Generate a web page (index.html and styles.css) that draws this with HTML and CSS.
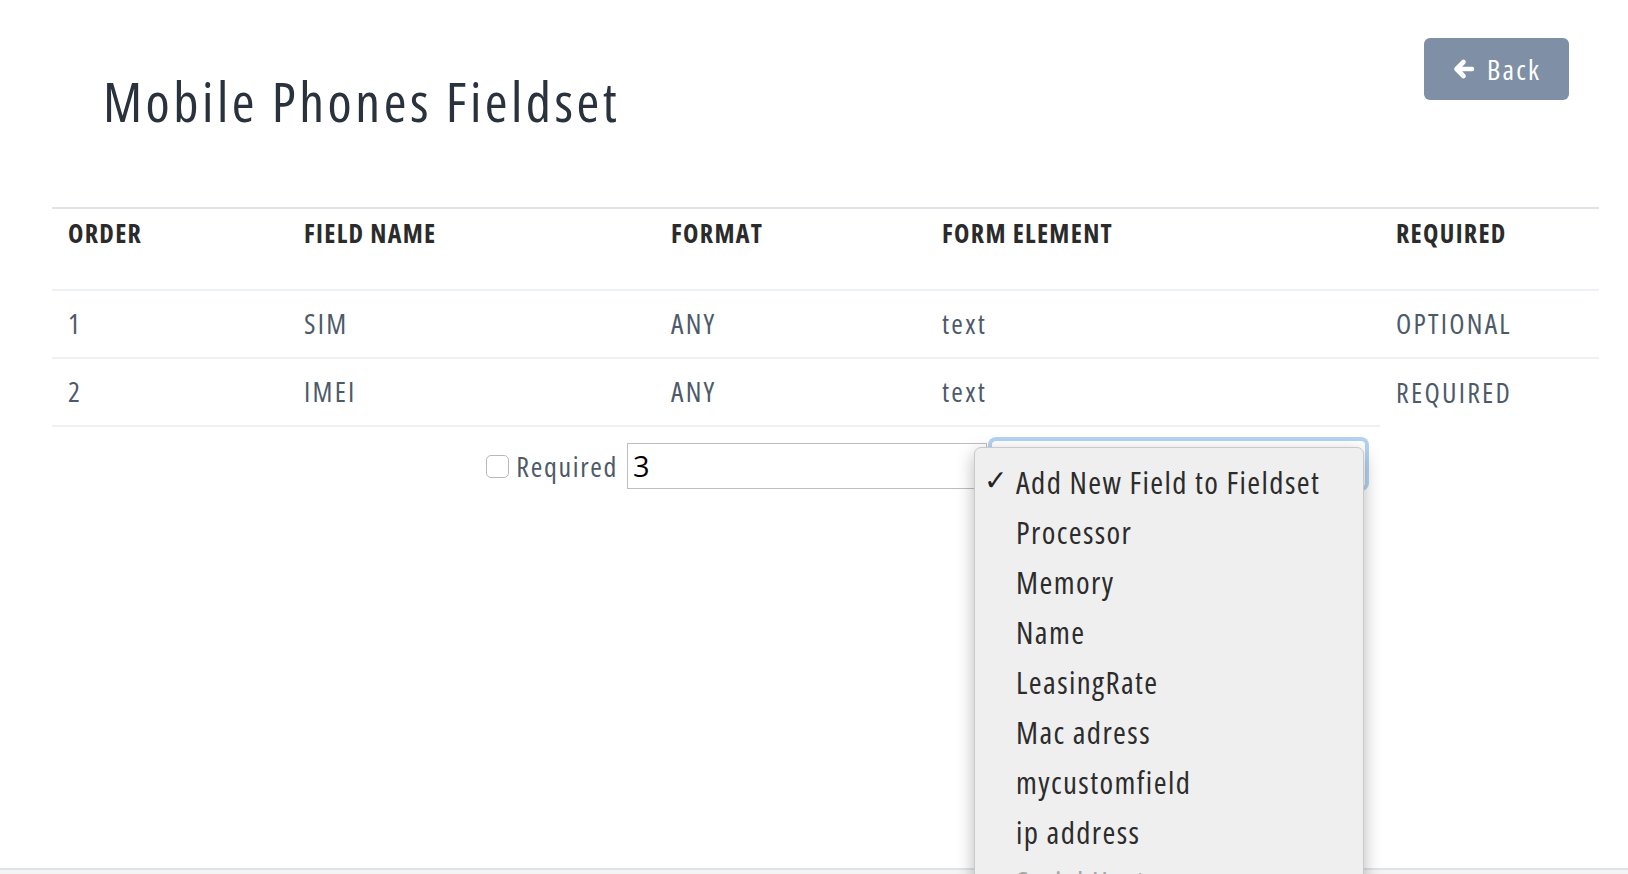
FILE: index.html
```html
<!DOCTYPE html>
<html>
<head>
<meta charset="utf-8">
<title>Mobile Phones Fieldset</title>
<link rel="stylesheet" href="styles.css">
</head>
<body>
<div class="main">
  <div class="header">
    <h1 class="title">Mobile Phones Fieldset</h1>
    <a class="btn-back" href="#">
      <svg class="back-icon" viewBox="0 0 24 24" width="24" height="24"><path d="M20 12H5M11.5 5L4.5 12l7 7" fill="none" stroke="#fff" stroke-width="4.6" stroke-linecap="round" stroke-linejoin="round"/></svg>
      <span>Back</span>
    </a>
  </div>
  <table class="fields">
    <colgroup>
      <col class="c1"><col class="c2"><col class="c3"><col class="c4"><col class="c5">
    </colgroup>
    <thead>
      <tr><th>ORDER</th><th>FIELD NAME</th><th>FORMAT</th><th>FORM ELEMENT</th><th>REQUIRED</th></tr>
    </thead>
    <tbody>
      <tr><td>1</td><td>SIM</td><td>ANY</td><td>text</td><td>OPTIONAL</td></tr>
      <tr><td>2</td><td>IMEI</td><td>ANY</td><td>text</td><td>REQUIRED</td></tr>
      <tr class="form-row">
        <td colspan="4" class="form-cell">
          <div class="add-form">
            <label class="req"><span class="checkbox"></span><span>Required</span></label>
            <div class="order-input">3</div>
            <div class="select-wrap">
              <div class="select"></div>
              <div class="menu">
                <div class="item selected"><span class="check">✓</span>Add New Field to Fieldset</div>
                <div class="item">Processor</div>
                <div class="item">Memory</div>
                <div class="item">Name</div>
                <div class="item">LeasingRate</div>
                <div class="item">Mac adress</div>
                <div class="item">mycustomfield</div>
                <div class="item">ip address</div>
                <div class="item muted">Serial Hostname</div>
              </div>
            </div>
          </div>
        </td>
        <td class="empty"></td>
      </tr>
    </tbody>
  </table>
</div>
<div class="footer"></div>
</body>
</html>
```
FILE: styles.css
```css
* { box-sizing: border-box; }
html, body { margin: 0; padding: 0; }
body {
  font-family: "Open Sans", "Noto Sans", sans-serif;
  font-stretch: 83%;
  letter-spacing: 0.05em;
  background: #fff;
  color: #4d5a6a;
  overflow: hidden;
}
.main {
  height: 868px;
  padding: 38px 29px 0 52px;
}
.header {
  display: flex;
  justify-content: space-between;
  align-items: flex-start;
  height: 169px;
}
.title {
  margin: 32px 0 0 51px;
  font-size: 55px;
  font-weight: 400;
  line-height: 62px;
  letter-spacing: 0.064em;
  color: #2a323d;
}
.btn-back {
  display: flex;
  align-items: center;
  gap: 11px;
  width: 145px;
  height: 62px;
  margin-right: 30px;
  padding-left: 28px;
  background: #7f8fa5;
  border-radius: 6px;
  color: #fff;
  text-decoration: none;
  font-size: 28px;
  letter-spacing: 0.08em;
}
.back-icon { display: block; }
.fields {
  width: 1547px;
  border-collapse: collapse;
  table-layout: fixed;
}
.c1 { width: 236px; }
.c2 { width: 367px; }
.c3 { width: 271px; }
.c4 { width: 454px; }
.c5 { width: 219px; }
.fields th {
  text-align: left;
  font-size: 26px;
  font-weight: 700;
  line-height: 36px;
  letter-spacing: 0.05em;
  color: #2b2b2b;
  padding: 6px 16px 38px;
  border-top: 2px solid #dfe4ea;
}
.fields td {
  font-size: 28px;
  line-height: 40px;
  letter-spacing: 0.08em;
  padding: 12px 16px 14px;
  border-top: 2px solid #edf0f4;
  vertical-align: middle;
}
.fields td.empty { border-top: none; }
.fields td.form-cell {
  padding: 14px 15px 0 16px;
  vertical-align: top;
  letter-spacing: 0.06em;
}
.add-form {
  display: flex;
  justify-content: flex-end;
  align-items: flex-start;
}
.req {
  display: flex;
  align-items: center;
  gap: 7px;
  margin-top: 2px;
  margin-right: 9px;
  height: 46px;
  font-size: 28px;
  color: #4d5a6a;
}
.checkbox {
  width: 23px;
  height: 23px;
  border: 1px solid #b9b9b9;
  border-radius: 5px;
  background: #fff;
}
.order-input {
  width: 360px;
  height: 46px;
  margin-top: 2px;
  border: 1px solid #bdbdbd;
  padding: 0 5px;
  font-size: 29px;
  line-height: 43px;
  color: #000;
  font-stretch: 100%;
  letter-spacing: 0;
}
.select-wrap {
  position: relative;
  margin-left: 5px;
  width: 373px;
}
.select {
  height: 46px;
  border-radius: 4px;
  background: #fff;
  box-shadow: 0 0 0 4px #b3d3f3;
}
.menu {
  position: absolute;
  left: -18px;
  top: 6px;
  width: 390px;
  height: 440px;
  padding-top: 9px;
  background: #efefef;
  border: 1px solid #c9c9c9;
  border-radius: 7px 7px 0 0;
  box-shadow: 0 6px 18px rgba(0,0,0,0.28);
  overflow: hidden;
}
.item {
  position: relative;
  height: 50px;
  line-height: 50px;
  padding-left: 41px;
  font-size: 31px;
  letter-spacing: 0.045em;
  color: #2c2c2c;
  white-space: nowrap;
}
.item.muted { color: #a8a8a8; }
.check {
  position: absolute;
  left: 9px;
  top: -1px;
  font-size: 28px;
  font-weight: 700;
  color: #222;
  font-family: "DejaVu Sans", sans-serif;
  font-stretch: 100%;
  letter-spacing: 0;
}
.footer {
  height: 40px;
  border-top: 2px solid #dde3ea;
  background: #f4f4f4;
}
```
